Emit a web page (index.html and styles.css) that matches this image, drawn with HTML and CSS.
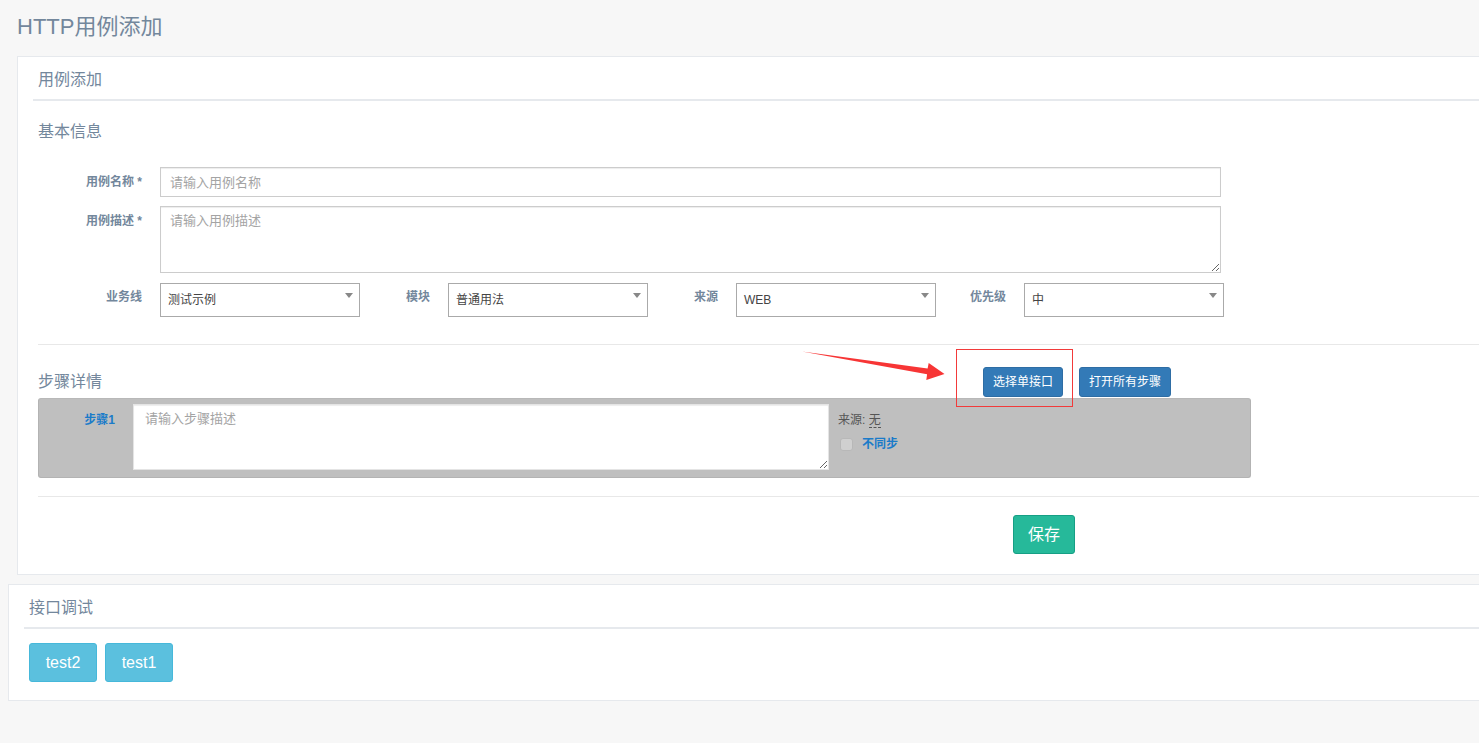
FILE: index.html
```html
<!DOCTYPE html>
<html lang="zh-CN">
<head>
<meta charset="utf-8">
<title>HTTP用例添加</title>
<link rel="stylesheet" href="styles.css">
</head>
<body>
<div class="page">
  <div class="main">
    <h1 class="page-title">HTTP用例添加</h1>
    <div class="panel panel-case">
      <div class="panel-title"><h2>用例添加</h2></div>
      <div class="panel-body">
        <h3 class="section-title first">基本信息</h3>
        <div class="form-row">
          <label class="form-label">用例名称 *</label>
          <input class="form-input" type="text" placeholder="请输入用例名称">
        </div>
        <div class="form-row">
          <label class="form-label">用例描述 *</label>
          <textarea class="form-textarea" placeholder="请输入用例描述"></textarea>
        </div>
        <div class="select-row">
          <label class="form-label sel-label first-label">业务线</label>
          <div class="select-box">测试示例<span class="caret"></span></div>
          <label class="form-label sel-label">模块</label>
          <div class="select-box">普通用法<span class="caret"></span></div>
          <label class="form-label sel-label">来源</label>
          <div class="select-box">WEB<span class="caret"></span></div>
          <label class="form-label sel-label">优先级</label>
          <div class="select-box">中<span class="caret"></span></div>
        </div>
        <div class="divider top-divider"></div>
        <div class="steps-head">
          <h3 class="section-title steps-title">步骤详情</h3>
          <div class="steps-actions">
            <button class="btn btn-primary" type="button">选择单接口</button>
            <button class="btn btn-primary" type="button">打开所有步骤</button>
          </div>
        </div>
        <div class="step">
          <div class="step-label">步骤1</div>
          <textarea class="step-text" placeholder="请输入步骤描述"></textarea>
          <div class="step-meta">
            <div class="step-source">来源: <span class="source-value">无</span></div>
            <div class="step-async"><span class="checkbox"></span><span class="async-label">不同步</span></div>
          </div>
        </div>
        <div class="divider bottom-divider"></div>
        <div class="save-row">
          <button class="btn btn-success" type="button">保存</button>
        </div>
      </div>
    </div>
  </div>
  <div class="panel panel-debug">
    <div class="panel-title"><h2>接口调试</h2></div>
    <div class="panel-body debug-body">
      <button class="btn btn-info" type="button">test2</button>
      <button class="btn btn-info" type="button">test1</button>
    </div>
  </div>

  <div class="mark-box"></div>
  <svg class="mark-arrow" width="160" height="40" viewBox="795 345 160 40" xmlns="http://www.w3.org/2000/svg">
    <polygon points="802,351.5 927.6,368.4 928.7,363 944.5,374 926.3,380 927.1,374.3" fill="#f73535"/>
  </svg>
</div>
</body>
</html>
```

FILE: styles.css
```css
html, body {
  margin: 0;
  padding: 0;
  overflow: hidden;
  background: #f7f7f7;
}

body {
  font-family: "Liberation Sans", "Noto Sans CJK SC", sans-serif;
  font-size: 13px;
  color: #73879c;
}

.page {
  position: relative;
  display: flow-root;
  width: 1720px;
  padding: 0 0 0 8px;
  min-height: 743px;
}

.main {
  margin-left: 9px;
}

.page-title {
  margin: 12px 0 14px 0;
  font-size: 22px;
  line-height: 30px;
  font-weight: normal;
  color: #73879c;
}

.panel {
  background: #fff;
  border: 1px solid #e6e9ed;
  padding: 0 15px;
}

.panel-title {
  padding: 12px 5px 8px 5px;
  border-bottom: 2px solid #e6e9ed;
}

.panel-title h2 {
  margin: 0;
  font-size: 16px;
  line-height: 22px;
  font-weight: normal;
  color: #73879c;
}

.panel-body {
  padding: 0 5px 20px 5px;
}

.section-title {
  margin: 0;
  font-size: 16px;
  line-height: 22px;
  font-weight: normal;
  color: #73879c;
}

.section-title.first {
  margin: 20px 0 24px 0;
}

.form-row {
  display: flex;
  align-items: flex-start;
  margin-bottom: 9px;
}

.form-row + .form-row {
  margin-bottom: 10px;
}

.form-label {
  box-sizing: border-box;
  width: 122px;
  flex: none;
  padding: 6px 18px 0 0;
  text-align: right;
  font-size: 12px;
  line-height: 18px;
  font-weight: bold;
  color: #73879c;
}

.form-input,
.form-textarea,
.step-text {
  box-sizing: border-box;
  margin: 0;
  border: 1px solid #ccc;
  border-radius: 0;
  background: #fff;
  box-shadow: inset 0 1px 1px rgba(0, 0, 0, 0.075);
  font-family: "Liberation Sans", "Noto Sans CJK SC", sans-serif;
  font-size: 13px;
  color: #555;
  outline: none;
}

.form-input {
  width: 1061px;
  height: 30px;
  padding: 0 9px;
}

.form-textarea {
  width: 1061px;
  height: 67px;
  padding: 5px 9px;
  resize: vertical;
  line-height: 18px;
}

.form-input::placeholder,
.form-textarea::placeholder,
.step-text::placeholder {
  color: #a4a4a4;
}

.select-row {
  display: grid;
  grid-template-columns: 122px 200px 88px 200px 88px 200px 88px 200px;
  align-items: start;
}

.sel-label {
  width: auto;
  padding-top: 5px;
}

.select-box {
  position: relative;
  box-sizing: border-box;
  height: 34px;
  border: 1px solid #aaa;
  background: #fff;
  padding: 0 7px;
  font-size: 12px;
  line-height: 32px;
  color: #444;
}

.caret {
  position: absolute;
  right: 6px;
  top: 9px;
  width: 0;
  height: 0;
  border-left: 4px solid transparent;
  border-right: 4px solid transparent;
  border-top: 5px solid #888;
}

.divider {
  height: 1px;
  background: #e8e8e8;
}

.top-divider {
  margin-top: 27px;
}

.steps-head {
  display: flex;
  align-items: center;
  margin-top: 22px;
  height: 30px;
}

.steps-title {
  width: 945px;
  flex: none;
}

.steps-actions {
  display: flex;
  gap: 16px;
}

.btn {
  box-sizing: border-box;
  margin: 0;
  border: 1px solid transparent;
  border-radius: 3px;
  font-family: "Liberation Sans", "Noto Sans CJK SC", sans-serif;
  color: #fff;
  cursor: pointer;
}

.btn-primary {
  height: 30px;
  padding: 0 9px;
  font-size: 12px;
  line-height: 28px;
  background: #337ab7;
  border-color: #2e6da4;
}

.step {
  display: flex;
  align-items: flex-start;
  margin-top: 1px;
  width: 1213px;
  box-sizing: border-box;
  background: #bfbfbf;
  border: 1px solid #b3b3b3;
  border-top-color: #b8b8b8;
  border-radius: 3px;
  padding: 5px 0 7px 0;
}

.step-label {
  box-sizing: border-box;
  width: 94px;
  flex: none;
  padding: 7px 18px 0 0;
  text-align: right;
  font-size: 12px;
  line-height: 18px;
  font-weight: bold;
  color: #1a7bc9;
}

.step-text {
  width: 696px;
  height: 66px;
  padding: 5px 11px;
  line-height: 18px;
  resize: vertical;
  border-color: #e4e4e4;
}

.step-meta {
  margin-left: 9px;
  padding-top: 7px;
  font-size: 12px;
  line-height: 18px;
}

.step-source {
  color: #555;
}

.source-value {
  border-bottom: 1px dashed #555;
}

.step-async {
  display: flex;
  align-items: center;
  margin-top: 6px;
}

.checkbox {
  display: inline-block;
  box-sizing: border-box;
  width: 13px;
  height: 13px;
  margin-left: 2px;
  background: #d0d0d0;
  border: 1px solid #b8b8b8;
  border-radius: 3px;
}

.async-label {
  margin-left: 9px;
  font-weight: bold;
  color: #1a7bc9;
}

.bottom-divider {
  margin-top: 18px;
}

.save-row {
  margin-top: 18px;
  padding-left: 975px;
}

.btn-success {
  height: 39px;
  padding: 0 14px;
  font-size: 16px;
  line-height: 37px;
  background: #26b99a;
  border-color: #169f85;
}

.panel-debug {
  margin-top: 9px;
}

.debug-body {
  display: flex;
  gap: 8px;
  padding-top: 14px;
  padding-bottom: 18px;
}

.btn-info {
  height: 39px;
  min-width: 68px;
  padding: 0 15px;
  font-size: 16px;
  line-height: 37px;
  background: #5bc0de;
  border-color: #46b8da;
}

.mark-box {
  position: absolute;
  left: 956px;
  top: 349px;
  width: 115px;
  height: 56px;
  border: 1px solid #f23a3a;
}

.mark-arrow {
  position: absolute;
  left: 795px;
  top: 345px;
}
```
